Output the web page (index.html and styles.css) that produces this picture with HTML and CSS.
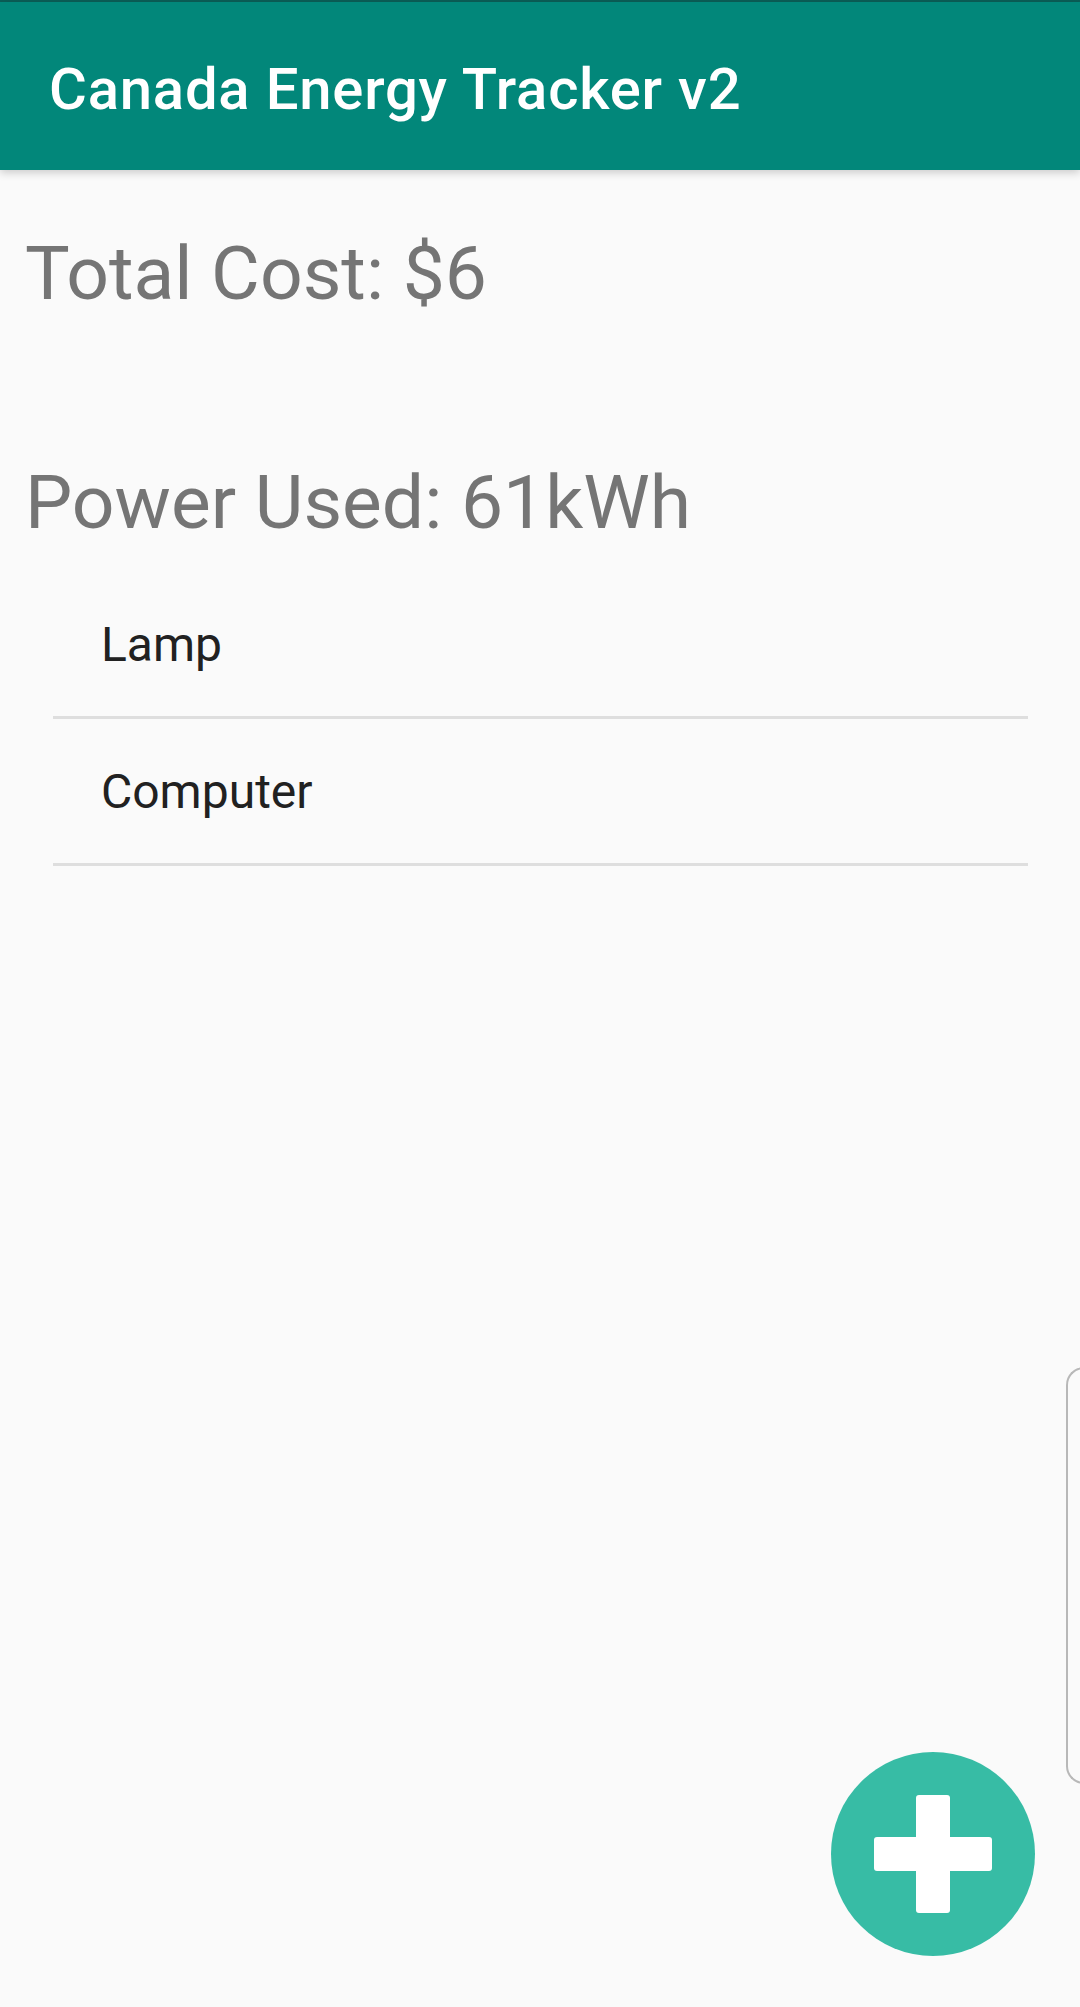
FILE: index.html
```html
<!DOCTYPE html>
<html>
<head>
<meta charset="utf-8">
<link rel="stylesheet" href="styles.css">
</head>
<body>
<div class="screen">
  <div class="statusline"></div>
  <header class="appbar">
    <h1 class="title">Canada Energy Tracker v2</h1>
  </header>
  <main class="content">
    <div class="stat stat-cost">Total Cost: $6</div>
    <div class="stat stat-power">Power Used: 61kWh</div>
    <ul class="list">
      <li class="item">Lamp</li>
      <li class="item">Computer</li>
    </ul>
  </main>
  <div class="edge-handle"></div>
  <button class="fab" aria-label="Add">
    <svg width="204" height="204" viewBox="0 0 204 204">
      <rect x="85" y="43" width="34" height="118" rx="3" fill="#ffffff"/>
      <rect x="43" y="85" width="118" height="34" rx="3" fill="#ffffff"/>
    </svg>
  </button>
</div>
</body>
</html>
```

FILE: styles.css
```css
html, body {
  margin: 0;
  padding: 0;
}
body {
  background: #fafafa;
  font-family: Roboto, "Noto Sans", sans-serif;
}
.screen {
  position: relative;
  width: 1080px;
  height: 2007px;
  overflow: hidden;
  background: #fafafa;
}
.statusline {
  height: 2px;
  background: #0b5e57;
}
.appbar {
  height: 168px;
  background: #02877a;
  display: flex;
  align-items: center;
  padding-left: 49px;
  padding-top: 6px;
  box-sizing: border-box;
  box-shadow: 0 3px 8px rgba(0, 0, 0, 0.18);
  position: relative;
  z-index: 1;
}
.title {
  margin: 0;
  color: #ffffff;
  font-family: Roboto, sans-serif;
  font-weight: 500;
  font-size: 58px;
  line-height: 68px;
  letter-spacing: 0.8px;
}
.content {
  display: flex;
  flex-direction: column;
}
.stat {
  font-size: 75px;
  line-height: 88px;
  color: #757575;
  padding-left: 25px;
}
.stat-cost {
  margin-top: 59px;
}
.stat-power {
  margin-top: 141px;
}
.list {
  list-style: none;
  margin: 26px 52px 0 53px;
  padding: 0;
}
.item {
  height: 144px;
  display: flex;
  align-items: center;
  padding-left: 48px;
  font-size: 48px;
  color: #212121;
  border-bottom: 3px solid #dedede;
}
.edge-handle {
  position: absolute;
  left: 1066px;
  top: 1367px;
  width: 40px;
  height: 413px;
  border: 2px solid #b8b8b8;
  border-right: none;
  border-radius: 18px 0 0 18px;
  background: #fafafa;
}
.fab {
  position: absolute;
  left: 831px;
  top: 1752px;
  width: 204px;
  height: 204px;
  padding: 0;
  border: none;
  border-radius: 50%;
  background: #37bca5;
  display: flex;
  align-items: center;
  justify-content: center;
}
.fab svg {
  display: block;
}
```
